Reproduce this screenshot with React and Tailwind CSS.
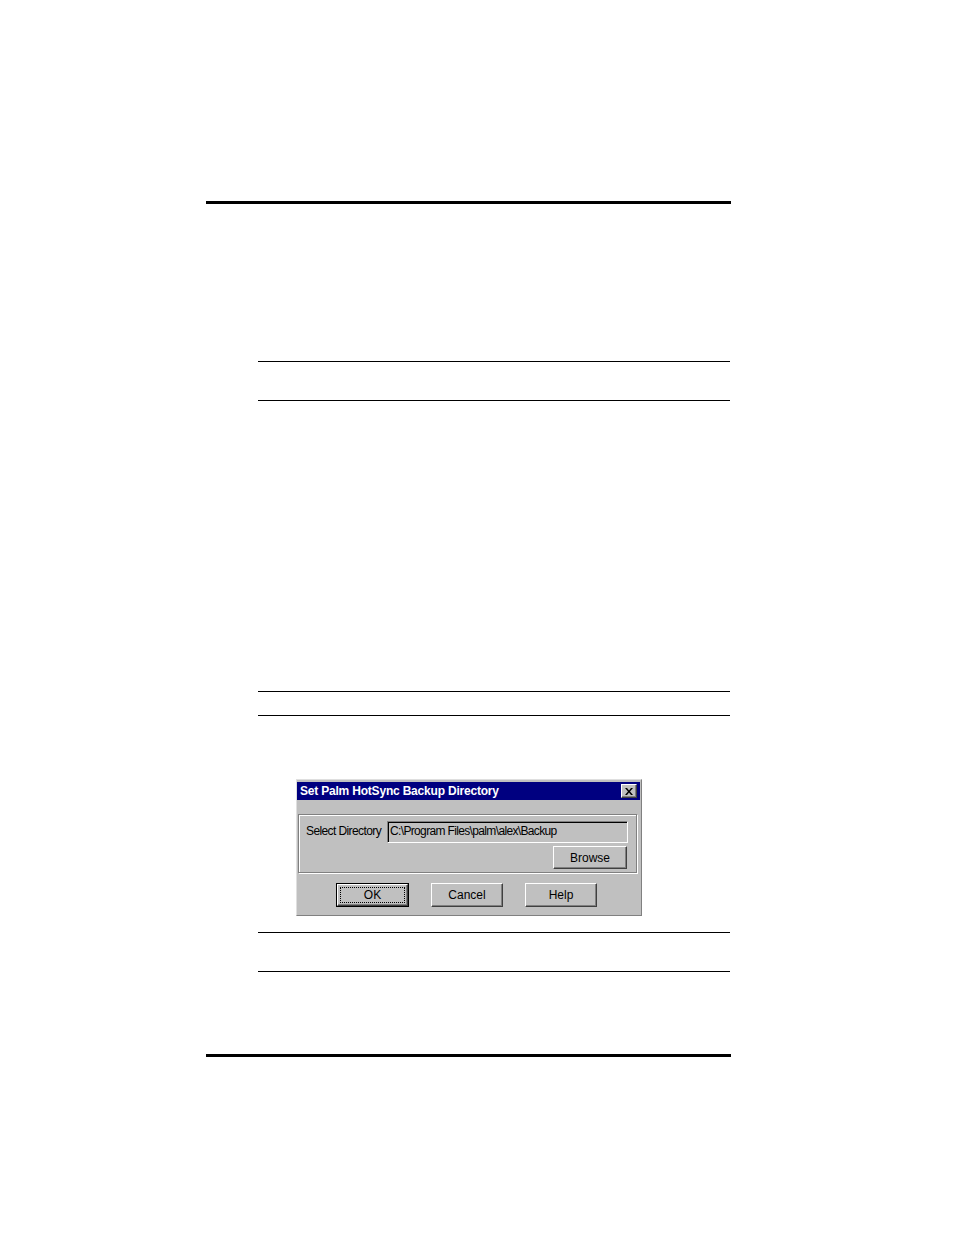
import React from "react";

const raised =
  "border border-t-white border-l-white border-r-[#404040] border-b-[#404040] shadow-[inset_-1px_-1px_0_#808080]";

function Button({ children, def, className = "" }) {
  if (def) {
    return (
      <div className={`border border-black ${className}`}>
        <div className={`h-full w-full ${raised} bg-[#c0c0c0] p-[2px]`}>
          <div className="h-full w-full border border-dotted border-black flex items-center justify-center leading-none">
            {children}
          </div>
        </div>
      </div>
    );
  }
  return (
    <div
      className={`${raised} bg-[#c0c0c0] flex items-center justify-center leading-none ${className}`}>
      {children}
    </div>
  );
}

function Dialog() {
  return (
    <div
      className="ml-[296px] w-[346px] h-[137px] bg-[#c0c0c0] border border-t-[#dfdfdf] border-l-[#dfdfdf] border-r-[#808080] border-b-[#808080] pt-[2px] pr-[1px] text-[12px] text-black"
      style={{ fontFamily: '"Liberation Sans", Arial, sans-serif' }}>
      <div className="h-[18px] bg-[#000080] flex items-center justify-between pl-[3px] pr-[3px]">
        <span className="text-white font-bold text-[12px] leading-none tracking-[-0.2px]">
          Set Palm HotSync Backup Directory
        </span>
        <div
          className={`w-[16px] h-[14px] ${raised} bg-[#c0c0c0] flex items-center justify-center`}>
          <svg width="8" height="7" viewBox="0 0 8 7">
            <path d="M0 0h2l2 2.5L6 0h2L5 3.5 8 7H6L4 4.5 2 7H0l3-3.5z" fill="#000" />
          </svg>
        </div>
      </div>

      <div className="mt-[14px] ml-[1px] mr-[3px] h-[59px] border border-[#808080] shadow-[inset_1px_1px_0_#fff,1px_1px_0_#fff] px-[7px] pt-[6px]">
        <div className="flex items-center">
          <span className="w-[81px] tracking-[-0.6px] -mt-[2px]">Select Directory</span>
          <div className="w-[241px] h-[22px] border border-t-[#808080] border-l-[#808080] border-r-white border-b-white shadow-[inset_1px_1px_0_#000] bg-[#c0c0c0] flex items-center pl-[2px] pb-[3px] tracking-[-0.65px]">
            C:\Program Files\palm\alex\Backup
          </div>
        </div>
        <div className="flex justify-end mt-[3px] mr-[2px]">
          <Button className="w-[74px] h-[23px]">Browse</Button>
        </div>
      </div>

      <div className="flex gap-[22px] ml-[39px] mt-[10px]">
        <Button def className="w-[73px] h-[24px]">
          OK
        </Button>
        <Button className="w-[72px] h-[24px]">Cancel</Button>
        <Button className="w-[72px] h-[24px]">Help</Button>
      </div>
    </div>
  );
}

export default function App() {
  return (
    <div className="w-[954px] h-[1235px] bg-white overflow-hidden pt-[201px]">
      <div className="ml-[206px] w-[525px] h-[3px] bg-black" />
      <div className="ml-[258px] mt-[157px] w-[472px] h-px bg-black" />
      <div className="ml-[258px] mt-[38px] w-[472px] h-px bg-black" />
      <div className="ml-[258px] mt-[290px] w-[472px] h-px bg-black" />
      <div className="ml-[258px] mt-[23px] w-[472px] h-px bg-black" />
      <div className="mt-[63px]">
        <Dialog />
      </div>
      <div className="ml-[258px] mt-[16px] w-[472px] h-px bg-black" />
      <div className="ml-[258px] mt-[38px] w-[472px] h-px bg-black" />
      <div className="ml-[206px] mt-[82px] w-[525px] h-[3px] bg-black" />
    </div>
  );
}
